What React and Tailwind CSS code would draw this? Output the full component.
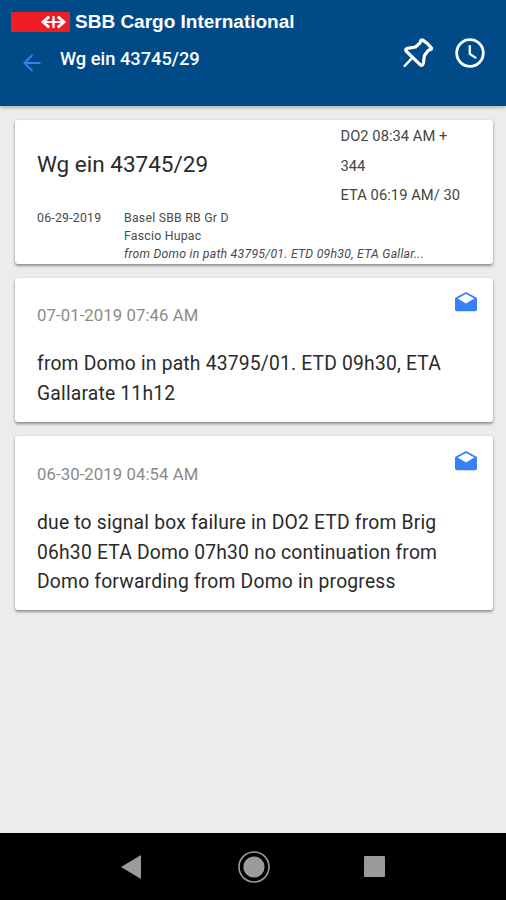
import React from "react";

function SbbMark() {
  return (
    <svg className="block h-5 w-[59px]" viewBox="0 0 59 20">
      <rect width="59" height="20" fill="#ee1c25" />
      <g fill="none" stroke="#fff" strokeWidth="2.2">
        <path d="M32 10h21M42.5 4v12" />
        <path d="M38.2 4.6 32 10l6.2 5.4M46.8 4.6 53 10l-6.2 5.4" strokeWidth="2.8" />
      </g>
    </svg>
  );
}

function Pin() {
  return (
    <svg className="block h-8 w-8" viewBox="0 0 32 32" fill="none" stroke="#fff" strokeWidth="3.2" strokeLinejoin="round" strokeLinecap="round">
      <path d="M20.6 3 Q25.5 5.8 29.6 11.2 Q30 12.4 26.4 13.2 L22.4 18.4 21.4 26Q20.6 29.6 18.4 27.8 L4 14Q3.2 12 5 11.4L13.6 10 18.2 5.6Q18.6 2.6 20.6 3Z" />
      <path d="M10.5 20.7 2.6 29" strokeWidth="2.4" />
    </svg>
  );
}

function Clock() {
  return (
    <svg className="block h-8 w-8" viewBox="0 0 32 32" fill="none" stroke="#fff">
      <circle cx="16" cy="16" r="13.3" strokeWidth="2.8" />
      <path d="M15.8 8.3v8.6l6.4 4.2" strokeWidth="2.3" />
    </svg>
  );
}

function OpenMail() {
  return (
    <svg className="block h-5 w-[22px]" viewBox="0 0 22 20">
      <path d="M11 0 .8 5.4Q0 5.9 0 7v10.6Q0 19.3 1.7 19.3h18.6q1.7 0 1.7-1.7V7q0-1.1-.8-1.6z" fill="#3880f6" />
      <path d="M11 2 2.7 6.5 11 11.6l8.3-5.1z" fill="#fff" />
    </svg>
  );
}

const CARD = "rounded-[3px] bg-white shadow-[0_2px_3px_rgba(0,0,0,0.38),0_0_2px_rgba(0,0,0,0.12)]";

function Message({ date, lines, height, offset }) {
  return (
    <article className={`${CARD} ${height} flex justify-between pl-[22.5px] pr-[15.5px]`}>
      <div className="whitespace-nowrap">
        <time className={`${offset} block text-[16.7px] leading-6 tracking-[0.1px] text-[#8a8a8a]`}>{date}</time>
        <div className="mt-[21.5px] text-[19.3px] leading-[29.5px] tracking-[0.19px] text-[#2a2a2a]">
          {lines.map((l) => (
            <p key={l}>{l}</p>
          ))}
        </div>
      </div>
      <div className="-ml-10 mt-[14.5px]">
        <OpenMail />
      </div>
    </article>
  );
}

export default function App() {
  return (
    <div className="flex h-[900px] w-[506px] flex-col overflow-hidden bg-[#ececec] font-['Roboto','Liberation_Sans',sans-serif]">
      <header className="z-10 flex h-[106px] shrink-0 justify-between bg-[#004b87] pr-5 text-white shadow-[0_1px_4px_rgba(0,0,0,0.35)]">
        <div className="whitespace-nowrap">
          <div className="mt-3 flex h-5 items-center gap-[5px] pl-[11px]">
            <SbbMark />
            <span className="font-['Liberation_Sans',sans-serif] text-[19px] font-bold leading-5">SBB Cargo International</span>
          </div>
          <div className="mt-[15px] flex h-6 pl-[23px]">
            <svg className="mt-[7px] h-[18px] w-[18px]" viewBox="0 0 18 18" fill="none" stroke="#397ee9" strokeWidth="2">
              <path d="M17.5 9H2M9.5 1 1.5 9l8 8" />
            </svg>
            <span className="ml-[19px] text-[18.3px] font-medium leading-6">Wg ein 43745/29</span>
          </div>
        </div>
        <div className="mt-[37px] flex gap-[20px]">
          <Pin />
          <Clock />
        </div>
      </header>

      <main className="flex flex-1 flex-col gap-[14px] pl-[14.5px] pr-[13.5px] pt-[14px] font-normal">
        <article className={`${CARD} h-[143.5px] whitespace-nowrap pl-[22.5px] text-[#2a2a2a]`}>
          <div className="flex h-[88px]">
            <h1 className="w-[303.5px] pt-[29px] text-[22.5px] leading-[30px]">Wg ein 43745/29</h1>
            <div className="pt-[2px] text-[14.7px] leading-[29.5px] tracking-[0.05px] text-[#444]">
              <p>DO2 08:34 AM +</p>
              <p>344</p>
              <p>ETA 06:19 AM/ 30</p>
            </div>
          </div>
          <div className="flex pt-[0.5px] text-[12.3px] leading-[18.4px] tracking-[0.23px] text-[#4a4a4a]">
            <time className="w-[87px]">06-29-2019</time>
            <div>
              <p>Basel SBB RB Gr D</p>
              <p>Fascio Hupac</p>
              <p className="italic">from Domo in path 43795/01. ETD 09h30, ETA Gallar...</p>
            </div>
          </div>
        </article>
        <Message
          height="h-[144.5px]"
          offset="mt-[26px]"
          date="07-01-2019 07:46 AM"
          lines={["from Domo in path 43795/01. ETD 09h30, ETA", "Gallarate 11h12"]}
        />
        <Message
          height="h-[174px]"
          offset="mt-[26.5px]"
          date="06-30-2019 04:54 AM"
          lines={["due to signal box failure in DO2 ETD from Brig", "06h30 ETA Domo 07h30 no continuation from", "Domo forwarding from Domo in progress"]}
        />
      </main>

      <footer className="flex h-[67px] shrink-0 items-center bg-black pl-[120px]">
        <svg className="h-8 w-[21px]" viewBox="0 0 21 32">
          <path d="M1 16 21 4v24z" fill="#9b9b9b" />
        </svg>
        <svg className="ml-[96.5px] h-8 w-8" viewBox="0 0 32 32">
          <circle cx="16" cy="16" r="15" fill="none" stroke="#9b9b9b" strokeWidth="1.6" />
          <circle cx="16" cy="16" r="10.6" fill="#9b9b9b" />
        </svg>
        <div className="ml-[94.5px] h-[21px] w-[21px] rounded-[1px] bg-[#9b9b9b]" />
      </footer>
    </div>
  );
}
